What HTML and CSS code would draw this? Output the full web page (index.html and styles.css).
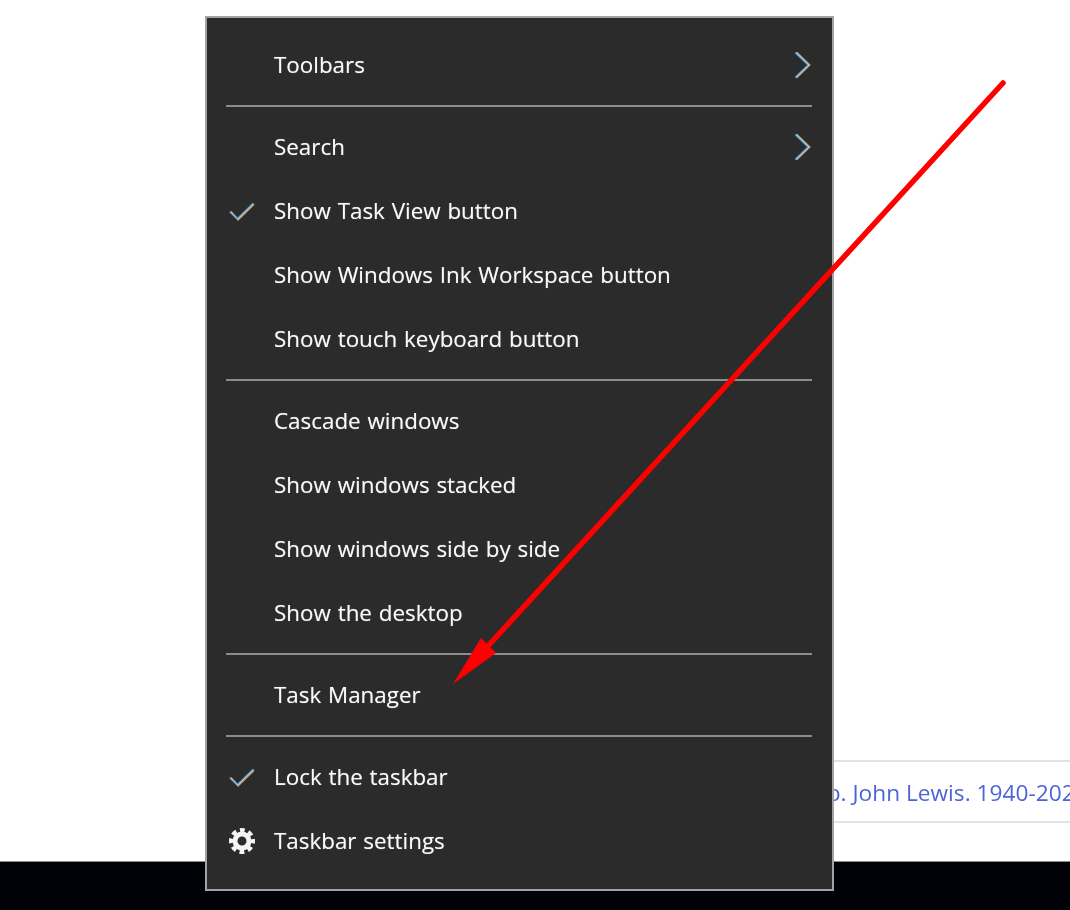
FILE: index.html
```html
<!DOCTYPE html>
<html lang="en">
<head>
<meta charset="utf-8">
<title>Taskbar context menu</title>
<link rel="stylesheet" href="styles.css">
</head>
<body>
<div class="desktop">
  <main class="page">
    <div class="entry"><a class="entry-link">Rep. John Lewis. 1940-2020</a></div>
  </main>
  <footer class="taskbar"></footer>

  <nav class="menu">
    <div class="item"><span class="slot"></span><span class="label">Toolbars</span>
      <svg class="chevron" viewBox="0 0 18 28"><path class="fringe-o" d="M3.6 1.5 16.6 14 3.6 26.5"/><path class="fringe-b" d="M2.4 1.5 15.4 14 2.4 26.5"/><path class="core" d="M3 1.5 16 14 3 26.5"/></svg></div>
    <div class="sep"></div>
    <div class="item"><span class="slot"></span><span class="label">Search</span>
      <svg class="chevron" viewBox="0 0 18 28"><path class="fringe-o" d="M3.6 1.5 16.6 14 3.6 26.5"/><path class="fringe-b" d="M2.4 1.5 15.4 14 2.4 26.5"/><path class="core" d="M3 1.5 16 14 3 26.5"/></svg></div>
    <div class="item"><span class="slot"><svg class="check" viewBox="0 0 28 20"><path class="fringe-o" d="M2 10 9.800 18.800 27 2.200"/><path class="fringe-b" d="M1 10.500 9 18 26 1.200"/><path class="core" d="M1.500 10.300 9.400 18.200 26.500 1.700"/></svg></span><span class="label">Show Task View button</span></div>
    <div class="item"><span class="slot"></span><span class="label">Show Windows Ink Workspace button</span></div>
    <div class="item"><span class="slot"></span><span class="label">Show touch keyboard button</span></div>
    <div class="sep"></div>
    <div class="item"><span class="slot"></span><span class="label">Cascade windows</span></div>
    <div class="item"><span class="slot"></span><span class="label">Show windows stacked</span></div>
    <div class="item"><span class="slot"></span><span class="label">Show windows side by side</span></div>
    <div class="item"><span class="slot"></span><span class="label">Show the desktop</span></div>
    <div class="sep"></div>
    <div class="item"><span class="slot"></span><span class="label">Task Manager</span></div>
    <div class="sep"></div>
    <div class="item"><span class="slot"><svg class="check" viewBox="0 0 28 20"><path class="fringe-o" d="M2 10 9.800 18.800 27 2.200"/><path class="fringe-b" d="M1 10.500 9 18 26 1.200"/><path class="core" d="M1.500 10.300 9.400 18.200 26.500 1.700"/></svg></span><span class="label">Lock the taskbar</span></div>
    <div class="item"><span class="slot"><svg class="gear" viewBox="0 0 26 26"><circle class="gear-ring" cx="13" cy="13" r="7"/><circle class="gear-teeth" cx="13" cy="13" r="10.500"/></svg></span><span class="label">Taskbar settings</span></div>
  </nav>

  <svg class="annotation" viewBox="0 0 1070 910">
    <path class="arrow-shaft" d="M1003 83 488 646"/>
    <path class="arrow-head" d="M453 684 481 638 496 653Z"/>
  </svg>
</div>
</body>
</html>
```

FILE: styles.css
```css
* { box-sizing: border-box; }

html, body {
  margin: 0;
  height: 100%;
  background: #fff;
  overflow: hidden;
}

.desktop {
  position: relative;
  display: flex;
  flex-direction: column;
  height: 910px;
  width: 1070px;
  overflow: hidden;
}

.page {
  flex: 1;
  padding: 760px 0 0 640px;
  background: #fff;
  border-bottom: 1px solid #8a8a8a;
}

.entry {
  height: 63px;
  display: flex;
  align-items: center;
  border-top: 2px solid #e1e1e8;
  border-bottom: 2px solid #e1e1e8;
  overflow: hidden;
}

.entry-link {
  font-family: "Open Sans", "Noto Sans", sans-serif;
  font-size: 22.700px;
  color: #4d64d6;
  white-space: nowrap;
  margin-left: 160px;
  padding-top: 2px;
  filter: blur(0.4px);
}

.taskbar {
  height: 48px;
  background: #010207;
}

.menu {
  position: absolute;
  left: 205px;
  top: 16px;
  width: 629px;
  height: 875px;
  padding: 15px 20px 15px 19px;
  background: #2b2b2b;
  border: 2px solid #a3a3a3;
  color: #fafafa;
  font-family: "Open Sans", "Noto Sans", sans-serif;
  font-size: 22.400px;
  word-spacing: 1px;
}

.item {
  display: flex;
  align-items: center;
  height: 64px;
}

.slot {
  display: flex;
  align-items: center;
  width: 48px;
  padding-left: 3px;
  flex: none;
}

.label {
  flex: 1;
  white-space: nowrap;
  padding-bottom: 2px;
  text-shadow: 0 0 1px rgba(255, 255, 255, 0.45);
  filter: blur(0.4px);
}

.sep {
  height: 18px;
  padding: 8px 0;
}

.sep::before {
  content: "";
  display: block;
  height: 2px;
  background: #8c8c8c;
}

.chevron {
  width: 18px;
  height: 28px;
  flex: none;
  margin-right: 1px;
  fill: none;
}

.check {
  width: 26px;
  height: 19px;
  fill: none;
}

.core, .fringe-b, .fringe-o {
  fill: none;
}

.core { stroke: #d5d8da; stroke-width: 0.800; }
.fringe-b { stroke: #4f9fdc; stroke-width: 1.800; }
.fringe-o { stroke: #d89a50; stroke-width: 1.800; }

.gear {
  width: 26px;
  height: 26px;
  fill: none;
}

.gear-ring { stroke: #f5f5f5; stroke-width: 5; }

.gear-teeth {
  stroke: #f5f5f5;
  stroke-width: 5;
  stroke-dasharray: 4.600 3.647;
  stroke-dashoffset: 2.300;
}

.annotation {
  position: absolute;
  left: 0;
  top: 0;
  width: 1070px;
  height: 910px;
  pointer-events: none;
}

.arrow-shaft {
  stroke: #fe0000;
  stroke-width: 5.500;
  stroke-linecap: round;
  fill: none;
}

.arrow-head { fill: #fe0000; }
```
